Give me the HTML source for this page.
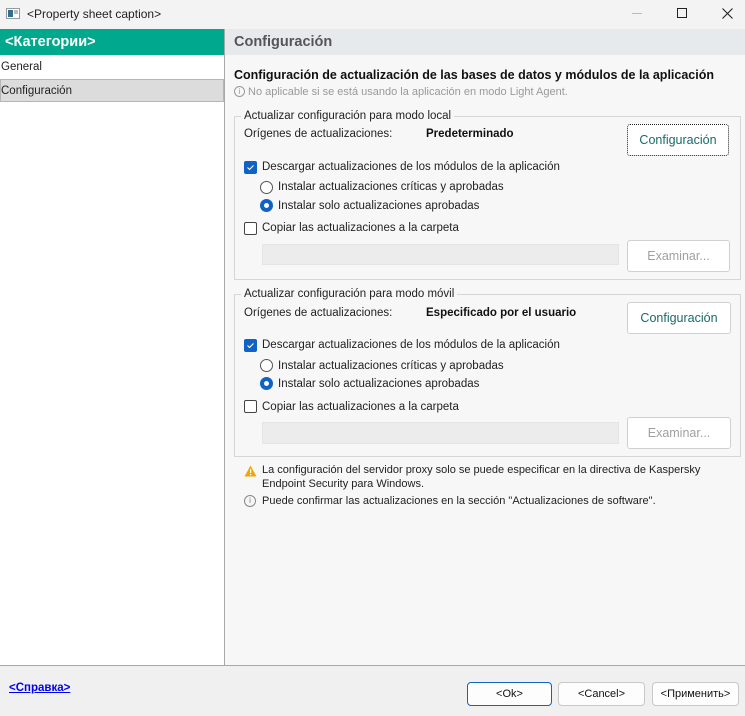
<!DOCTYPE html>
<html><head><meta charset="utf-8"><style>
*{margin:0;padding:0;box-sizing:border-box}
body{width:745px;height:716px;position:relative;overflow:hidden;background:#f7f7f7;font-family:"Liberation Sans","DejaVu Sans",sans-serif;font-size:11.5px;color:#222}
.a{position:absolute}
.t{position:absolute;white-space:nowrap;line-height:14px}
.btn{position:absolute;background:#fff;border:1px solid #d0d0d0;border-radius:3px;text-align:center;color:#1a6a6a;font-size:12.5px}
.dis{color:#a0a0a0}
.cb{position:absolute;width:13px;height:13px;border:1px solid #444;border-radius:2px;background:#fff}
.cbon{background:#0f62c6;border-color:#0f62c6}
.rb{position:absolute;width:13px;height:13px;border:1px solid #555;border-radius:50%;background:#fff}
.rbon{border:4px solid #0f62c6}
.gb{position:absolute;border:1px solid #d6d6d6}
.lg{position:absolute;background:#f7f7f7;padding:0 3px;line-height:14px;white-space:nowrap}
.inp{position:absolute;background:#ececec;border:1px solid #e4e4e4}
.fb{position:absolute;background:#fdfdfd;border:1px solid #c8c8c8;border-radius:4px;text-align:center;line-height:22px;font-size:11px;color:#111}
</style></head><body>
<div class="a" style="left:0;top:0;width:745px;height:29px;background:#f3f3f3"></div>
<div class="a" style="left:6px;top:8px;width:14px;height:11px;border:1px solid #999;background:#fff"></div>
<div class="a" style="left:8px;top:10px;width:5px;height:7px;background:#2f6f8f"></div>
<div class="a" style="left:14px;top:10px;width:4px;height:4px;background:#bbb"></div>
<div class="t" style="left:27px;top:7px;font-size:12px">&lt;Property sheet caption&gt;</div>
<div class="a" style="left:632px;top:13px;width:10px;height:1px;background:#bbb"></div>
<div class="a" style="left:677px;top:8px;width:10px;height:10px;border:1px solid #222"></div>
<svg class="a" style="left:722px;top:8px" width="11" height="11"><path d="M0.5 0.5L10.5 10.5M10.5 0.5L0.5 10.5" stroke="#222" stroke-width="1.1"/></svg>
<div class="a" style="left:0;top:29px;width:224px;height:636px;background:#fff"></div>
<div class="a" style="left:0;top:29px;width:224px;height:26px;background:#00a88e"></div>
<div class="t" style="left:5px;top:34px;color:#fff;font-weight:bold;font-size:14.5px;line-height:16px">&lt;Категории&gt;</div>
<div class="t" style="left:1px;top:60px">General</div>
<div class="a" style="left:0;top:79px;width:224px;height:23px;background:#dcdcdc;border:1px solid #b5b5b5"></div>
<div class="t" style="left:1px;top:84px">Configuración</div>
<div class="a" style="left:224px;top:29px;width:1px;height:636px;background:#a8a8a8"></div>
<div class="a" style="left:225px;top:29px;width:520px;height:26px;background:#e6eaed"></div>
<div class="t" style="left:234px;top:34px;font-weight:bold;font-size:14.5px;line-height:16px;color:#555">Configuración</div>
<div class="t" style="left:234px;top:67px;font-weight:bold;font-size:12.5px;line-height:16px;color:#111">Configuración de actualización de las bases de datos y módulos de la aplicación</div>
<div class="a" style="left:234px;top:86px;width:11px;height:11px;border:1px solid #999;border-radius:50%;font-size:8px;line-height:9px;text-align:center;color:#999">i</div>
<div class="t" style="left:248px;top:85px;color:#999;font-size:11px">No aplicable si se está usando la aplicación en modo Light Agent.</div>
<div class="gb" style="left:234px;top:116px;width:507px;height:164px"></div>
<div class="lg" style="left:241px;top:109px">Actualizar configuración para modo local</div>
<div class="t" style="left:244px;top:127px">Orígenes de actualizaciones:</div>
<div class="t" style="left:426px;top:127px;font-weight:bold;color:#111">Predeterminado</div>
<div class="btn" style="left:627px;top:124px;width:102px;height:32px;line-height:30px;border:1px dotted #222">Configuración</div>
<div class="cb cbon" style="left:244px;top:161px"></div>
<svg class="a" style="left:246px;top:163px" width="9" height="9"><path d="M1.5 4.5L3.5 6.5L7.5 2.5" stroke="#fff" stroke-width="1.1" fill="none"/></svg>
<div class="t" style="left:262px;top:160px">Descargar actualizaciones de los módulos de la aplicación</div>
<div class="rb" style="left:260px;top:181px"></div>
<div class="t" style="left:278px;top:180px">Instalar actualizaciones críticas y aprobadas</div>
<div class="rb rbon" style="left:260px;top:199px"></div>
<div class="t" style="left:278px;top:199px">Instalar solo actualizaciones aprobadas</div>
<div class="cb" style="left:244px;top:222px"></div>
<div class="t" style="left:262px;top:221px">Copiar las actualizaciones a la carpeta</div>
<div class="inp" style="left:262px;top:244px;width:357px;height:21px"></div>
<div class="btn dis" style="left:627px;top:240px;width:103px;height:32px;line-height:30px">Examinar...</div>
<div class="gb" style="left:234px;top:294px;width:507px;height:163px"></div>
<div class="lg" style="left:241px;top:287px">Actualizar configuración para modo móvil</div>
<div class="t" style="left:244px;top:306px">Orígenes de actualizaciones:</div>
<div class="t" style="left:426px;top:306px;font-weight:bold;color:#111">Especificado por el usuario</div>
<div class="btn" style="left:627px;top:302px;width:104px;height:32px;line-height:30px">Configuración</div>
<div class="cb cbon" style="left:244px;top:339px"></div>
<svg class="a" style="left:246px;top:341px" width="9" height="9"><path d="M1.5 4.5L3.5 6.5L7.5 2.5" stroke="#fff" stroke-width="1.1" fill="none"/></svg>
<div class="t" style="left:262px;top:338px">Descargar actualizaciones de los módulos de la aplicación</div>
<div class="rb" style="left:260px;top:359px"></div>
<div class="t" style="left:278px;top:359px">Instalar actualizaciones críticas y aprobadas</div>
<div class="rb rbon" style="left:260px;top:377px"></div>
<div class="t" style="left:278px;top:377px">Instalar solo actualizaciones aprobadas</div>
<div class="cb" style="left:244px;top:400px"></div>
<div class="t" style="left:262px;top:400px">Copiar las actualizaciones a la carpeta</div>
<div class="inp" style="left:262px;top:422px;width:357px;height:22px"></div>
<div class="btn dis" style="left:627px;top:417px;width:104px;height:32px;line-height:30px">Examinar...</div>
<svg class="a" style="left:244px;top:465px" width="13" height="12"><path d="M6.5 0.5L12.5 11.5H0.5Z" fill="#f0a800"/><rect x="6" y="4" width="1.2" height="4" fill="#fff"/><rect x="6" y="9" width="1.2" height="1.2" fill="#fff"/></svg>
<div class="t" style="left:262px;top:464px;font-size:11px;line-height:13.5px;white-space:normal;width:475px">La configuración del servidor proxy solo se puede especificar en la directiva de Kaspersky Endpoint Security para Windows.</div>
<div class="a" style="left:244px;top:495px;width:12px;height:12px;border:1px solid #888;border-radius:50%;font-size:8px;line-height:10px;text-align:center;color:#777">i</div>
<div class="t" style="left:262px;top:494px;font-size:11px">Puede confirmar las actualizaciones en la sección "Actualizaciones de software".</div>
<div class="a" style="left:0;top:665px;width:745px;height:51px;background:#f0f0f0;border-top:1px solid #a8a8a8"></div>
<div class="t" style="left:9px;top:681px;color:#0000ee;text-decoration:underline;font-weight:bold;font-size:11.5px">&lt;Справка&gt;</div>
<div class="fb" style="left:467px;top:682px;width:85px;height:24px;border-color:#0f62c6">&lt;Ok&gt;</div>
<div class="fb" style="left:558px;top:682px;width:87px;height:24px">&lt;Cancel&gt;</div>
<div class="fb" style="left:652px;top:682px;width:87px;height:24px">&lt;Применить&gt;</div>
</body></html>
